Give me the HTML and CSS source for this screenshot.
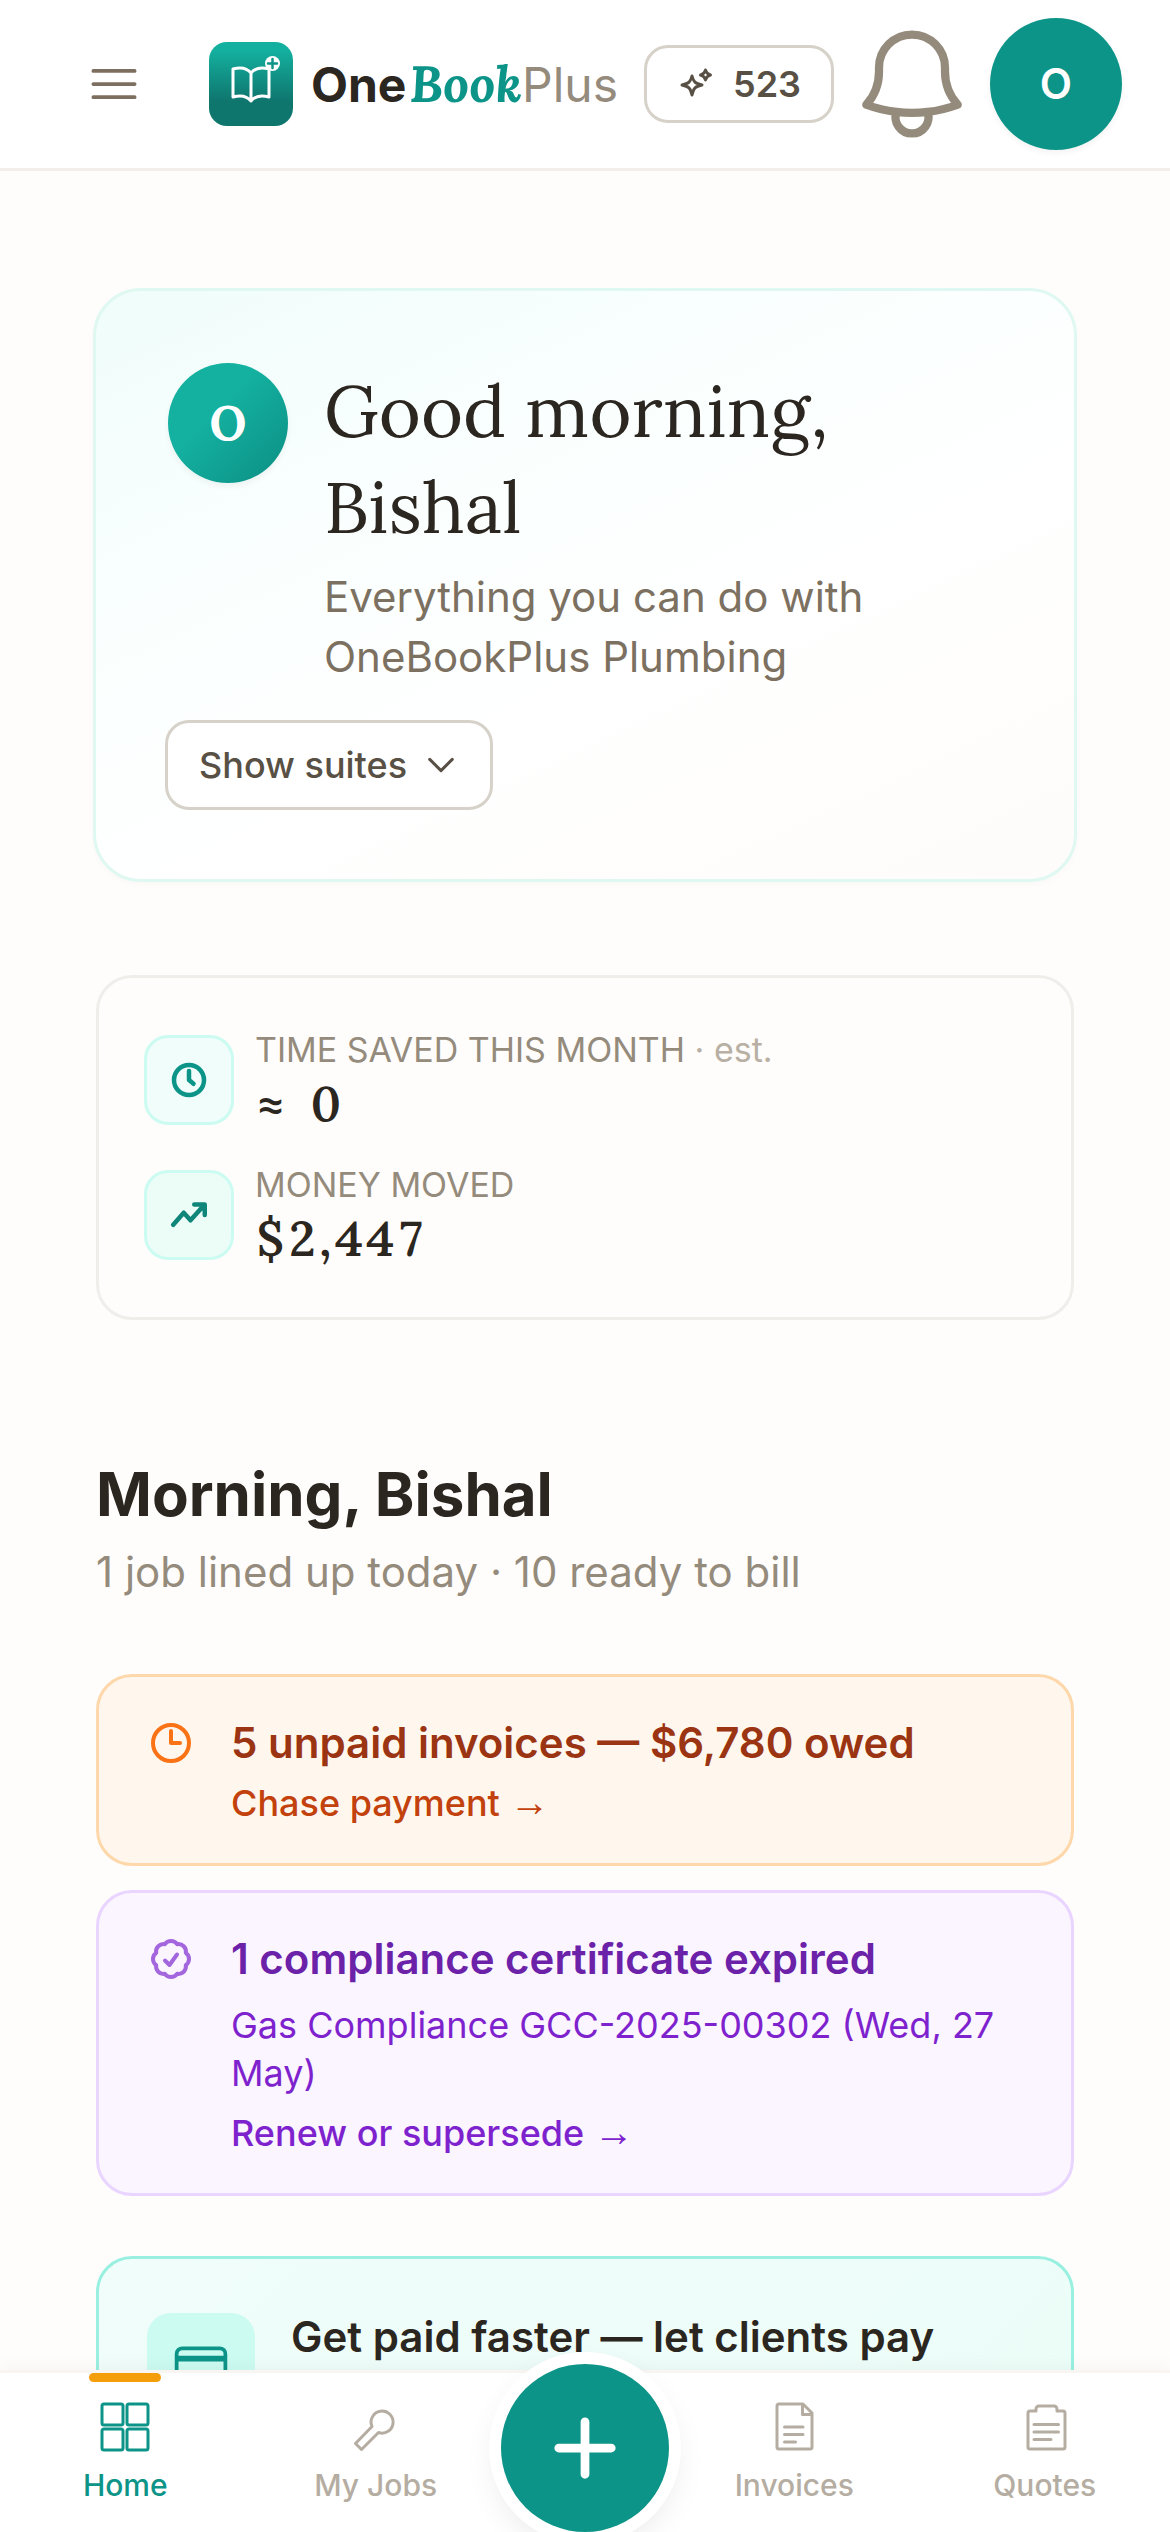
FILE: index.html
```html
<!DOCTYPE html>
<html lang="en">
<head>
  <meta charset="UTF-8">
  <meta name="viewport" content="width=device-width, initial-scale=1">
  <title>OneBookPlus</title>
  <link rel="stylesheet" href="styles.css">
</head>
<body>

<header class="topbar">
  <button type="button" class="icon-btn menu-btn" aria-label="Menu">
    <svg viewBox="0 0 24 24"><path d="M3.75 6.75h16.5M3.75 12h16.5M3.75 17.25h16.5"/></svg>
  </button>

  <a href="#" class="brand">
    <svg class="brand-logo" viewBox="0 0 84 84">
      <defs>
        <linearGradient id="logoFill" x1="0" y1="0" x2="0" y2="1">
          <stop offset="0.1" stop-color="#14b09f"/>
          <stop offset="0.7" stop-color="#0f766e"/>
        </linearGradient>
      </defs>
      <rect width="84" height="84" rx="18" fill="url(#logoFill)"/>
      <path d="M42 31c-4-5-11-6-18-4v28c7-2 14-1 18 4 4-5 11-6 18-4V27c-7-2-14-1-18 4zM42 31v28" fill="none" stroke="#fff" stroke-width="3" stroke-linejoin="round"/>
      <circle cx="63.500" cy="21.500" r="7.500" fill="#fff"/>
      <path d="M63.500 17v9M59 21.500h9" stroke="#0d9488" stroke-width="2.500" stroke-linecap="round"/>
    </svg>
    <span class="brand-name"><b>One</b><em>Book</em><span>Plus</span></span>
  </a>

  <div class="topbar-actions">
    <button type="button" class="credits">
      <svg viewBox="0 0 36 36"><path d="M15 10c1.500 6 3 7.500 10 9-7 1.500-8.500 3-10 10-1.500-7-3-8.500-10-10 7-1.500 8.500-3 10-9zM28.500 4c.8 3.200 1.800 4.200 5 5-3.200.8-4.200 1.800-5 5-.8-3.200-1.800-4.200-5-5 3.200-.8 4.200-1.800 5-5z"/></svg>
      523
    </button>
    <button type="button" class="icon-btn bell-btn" aria-label="Notifications">
      <svg viewBox="0 0 24 24"><path d="M14.857 17.082a23.848 23.848 0 0 0 5.454-1.310A8.967 8.967 0 0 1 18 9.750V9A6 6 0 0 0 6 9v.75a8.967 8.967 0 0 1-2.312 6.022c1.733.64 3.560 1.085 5.455 1.310m5.714 0a24.255 24.255 0 0 1-5.714 0m5.714 0a3 3 0 1 1-5.714 0"/></svg>
    </button>
    <button type="button" class="avatar">O</button>
  </div>
</header>

<main class="content">
  <section class="hero">
    <div class="hero-top">
      <div class="hero-avatar">O</div>
      <div class="hero-text">
        <h1>Good morning, Bishal</h1>
        <p>Everything you can do with OneBookPlus Plumbing</p>
      </div>
    </div>
    <button type="button" class="suites-btn">
      Show suites
      <svg viewBox="0 0 24 24"><path d="M19.500 8.250l-7.500 7.500-7.500-7.500"/></svg>
    </button>
  </section>

  <section class="stats">
    <div class="stat">
      <div class="stat-icon">
        <svg viewBox="0 0 24 24"><circle cx="12" cy="12" r="10"/><path d="M12 6v6l3 2.500"/></svg>
      </div>
      <div>
        <div class="stat-label">TIME SAVED THIS MONTH <span>· est.</span></div>
        <div class="stat-value">≈ 0</div>
      </div>
    </div>
    <div class="stat">
      <div class="stat-icon stat-icon-money">
        <svg viewBox="0 0 24 24"><path d="M1.500 18.500l7-8 4.500 5 9-10M15.500 5h7v7"/></svg>
      </div>
      <div>
        <div class="stat-label">MONEY MOVED</div>
        <div class="stat-value">$2,447</div>
      </div>
    </div>
  </section>

  <section class="today">
    <h2>Morning, Bishal</h2>
    <p class="today-sub">1 job lined up today · 10 ready to bill</p>

    <div class="alerts">
      <article class="alert alert-orange">
        <svg viewBox="0 0 24 24"><path d="M12 6v6h4.500M21 12a9 9 0 1 1-18 0 9 9 0 0 1 18 0z"/></svg>
        <div>
          <h3>5 unpaid invoices — $6,780 owed</h3>
          <a href="#">Chase payment <span class="arrow">→</span></a>
        </div>
      </article>

      <article class="alert alert-purple">
        <svg viewBox="0 0 24 24"><path d="M9 12.750L11.250 15 15 9.750M21 12c0 1.268-.63 2.390-1.593 3.068a3.745 3.745 0 0 1-1.043 3.296 3.745 3.745 0 0 1-3.296 1.043A3.745 3.745 0 0 1 12 21c-1.268 0-2.390-.63-3.068-1.593a3.746 3.746 0 0 1-3.296-1.043 3.745 3.745 0 0 1-1.043-3.296A3.745 3.745 0 0 1 3 12c0-1.268.63-2.390 1.593-3.068a3.745 3.745 0 0 1 1.043-3.296 3.746 3.746 0 0 1 3.296-1.043A3.746 3.746 0 0 1 12 3c1.268 0 2.390.63 3.068 1.593a3.746 3.746 0 0 1 3.296 1.043 3.746 3.746 0 0 1 1.043 3.296A3.745 3.745 0 0 1 21 12z"/></svg>
        <div>
          <h3>1 compliance certificate expired</h3>
          <p>Gas Compliance GCC-2025-00302 (Wed, 27 May)</p>
          <a href="#">Renew or supersede <span class="arrow">→</span></a>
        </div>
      </article>
    </div>
  </section>

  <section class="promo">
    <div class="promo-icon">
      <svg viewBox="0 0 24 24"><path d="M2.250 8.250h19.500M2.250 9h19.500M4.500 19.500h15a2.250 2.250 0 0 0 2.250-2.250V6.750A2.250 2.250 0 0 0 19.500 4.500h-15a2.250 2.250 0 0 0-2.250 2.250v10.500A2.250 2.250 0 0 0 4.500 19.500z"/></svg>
    </div>
    <h3>Get paid faster — let clients pay</h3>
  </section>
</main>

<nav class="tabbar">
  <a href="#" class="tab active">
    <svg viewBox="0 0 60 60"><rect x="7" y="7" width="21" height="21" rx="2"/><rect x="32" y="7" width="21" height="21" rx="2"/><rect x="7" y="32" width="21" height="21" rx="2"/><rect x="32" y="32" width="21" height="21" rx="2"/></svg>
    Home
  </a>
  <a href="#" class="tab">
    <svg viewBox="0 0 60 60"><path d="M26 29.500A11 11 0 1 1 32.500 35.500L15.500 52.500 9.500 46.500z"/></svg>
    My Jobs
  </a>
  <button type="button" class="fab" aria-label="Add">
    <svg viewBox="0 0 24 24"><path d="M12 4.500v15M4.500 12h15"/></svg>
  </button>
  <a href="#" class="tab">
    <svg viewBox="0 0 60 60"><path d="M14 7h25l9 9v34a2 2 0 0 1-2 2H15a2 2 0 0 1-2-2V9a2 2 0 0 1 2-2zM38.500 7v10.500H48M20.500 30h18.500M20.500 37.500h18.500M20.500 45h11"/></svg>
    Invoices
  </a>
  <a href="#" class="tab">
    <svg viewBox="0 0 60 60"><path d="M21 14v-2a3 3 0 0 1 3-3h15a3 3 0 0 1 3 3v2h6a2 2 0 0 1 2 2v34a2 2 0 0 1-2 2H15a2 2 0 0 1-2-2V16a2 2 0 0 1 2-2zM19 27.500h24.500M19 35h24.500M19 42.500h17"/></svg>
    Quotes
  </a>
</nav>

</body>
</html>
```

FILE: styles.css
```css
* {
  box-sizing: border-box;
}
body {
  margin: 0;
  height: 100vh;
  display: flex;
  flex-direction: column;
  background: #fefdfb;
  color: #2c2621;
  font-family: Inter, "Liberation Sans", sans-serif;
  font-size: 42px;
  line-height: 60px;
}
h1, h2, h3, p {
  margin: 0;
}
a {
  color: inherit;
  text-decoration: none;
}
button {
  font: inherit;
  color: inherit;
  padding: 0;
  border: none;
  background: none;
  cursor: pointer;
}
svg {
  display: block;
  flex: none;
  fill: none;
  stroke: currentColor;
  stroke-width: 1.5;
  stroke-linecap: round;
  stroke-linejoin: round;
}

/* header */
.topbar {
  display: flex;
  align-items: center;
  padding: 18px 48px 18px 84px;
  background: #fff;
  border-bottom: 3px solid #f3eeea;
}
.menu-btn {
  color: #7c6f60;
}
.menu-btn svg {
  width: 60px;
  height: 60px;
}
.brand {
  display: flex;
  align-items: center;
  gap: 18px;
  margin-left: 65px;
}
.brand-logo {
  width: 84px;
  height: 84px;
  stroke: none;
}
.brand-name {
  font-size: 48px;
  white-space: nowrap;
}
.brand-name b {
  font-weight: 700;
}
.brand-name em {
  margin-left: 3px;
  font-family: Lora, "Liberation Serif", serif;
  font-size: 51px;
  font-weight: 700;
  color: #0d9488;
}
.brand-name span {
  font-weight: 400;
  color: #958b7c;
}
.topbar-actions {
  display: flex;
  align-items: center;
  gap: 12px;
  margin-left: auto;
}
.credits {
  display: flex;
  align-items: center;
  gap: 20px;
  height: 78px;
  padding: 0 30px;
  border: 3px solid #d6d2c9;
  border-radius: 24px;
  background: #fff;
  color: #585044;
  font-size: 36px;
  font-weight: 600;
}
.credits svg {
  width: 36px;
  height: 36px;
  stroke-width: 3;
}
.bell-btn {
  color: #958b7c;
}
.bell-btn svg {
  width: 132px;
  height: 132px;
}
.avatar {
  width: 132px;
  height: 132px;
  border-radius: 50%;
  background: #0d9488;
  color: #fff;
  font-weight: 600;
  box-shadow: 0 3px 6px rgba(0,0,0,0.05);
}

/* scrolling content */
.content {
  flex: 1;
  min-height: 0;
  padding: 117px 96px 48px;
  overflow-y: auto;
  scrollbar-width: none;
}
.hero {
  margin: 0 -3px;
  padding: 69px;
  border: 3px solid #dff8f1;
  border-radius: 48px;
  background: linear-gradient(155deg, #f0fdfa 0%, #f9fffe 30%, #fff 60%, #fefcfa 100%);
  box-shadow: 0 3px 6px rgba(0,0,0,0.02);
}
.hero-top {
  display: flex;
  gap: 33px;
}
.hero-avatar {
  flex: none;
  display: flex;
  align-items: center;
  justify-content: center;
  width: 120px;
  height: 120px;
  margin: 3px;
  border-radius: 50%;
  background: linear-gradient(135deg, #14b0a0 40%, #0d9488 90%);
  color: #fff;
  font-family: Lora, "Liberation Serif", serif;
  font-size: 48px;
  font-weight: 700;
  box-shadow: 0 3px 6px rgba(0,0,0,0.05);
}
.hero-text {
  max-width: 600px;
  padding-top: 3px;
}
.hero h1 {
  font-family: Lora, "Liberation Serif", serif;
  font-size: 72px;
  font-weight: 400;
  line-height: 96px;
}
.hero p {
  margin-top: 12px;
  color: #7c7061;
}
.suites-btn {
  display: flex;
  align-items: center;
  gap: 16px;
  height: 90px;
  margin-top: 33px;
  padding: 0 31px;
  border: 3px solid #d6d2c9;
  border-radius: 24px;
  background: #fff;
  color: #585044;
  font-size: 36px;
  font-weight: 500;
}
.suites-btn svg {
  width: 36px;
  height: 36px;
  stroke-width: 2;
}

.stats {
  display: flex;
  flex-direction: column;
  gap: 27px;
  margin-top: 93px;
  padding: 48px 45px;
  border: 3px solid #f0eeea;
  border-radius: 36px;
}
.stat {
  display: flex;
  align-items: center;
  gap: 21px;
}
.stat-icon {
  display: flex;
  align-items: center;
  justify-content: center;
  width: 90px;
  height: 90px;
  border: 3px solid #ccfbf1;
  border-radius: 24px;
  background: #f0fdfa;
  color: #0d9488;
}
.stat-icon-money {
  background: #ecfdf8;
  color: #10857a;
}
.stat-icon svg {
  width: 36px;
  height: 36px;
  stroke-width: 3;
}
.stat-label {
  color: #958b7c;
  font-size: 34px;
  line-height: 48px;
}
.stat-label span {
  color: #b8b0a5;
}
.stat-value {
  font-family: Lora, "Liberation Serif", serif;
  font-size: 48px;
  font-weight: 600;
  line-height: 60px;
  font-variant-numeric: tabular-nums;
}

.today {
  margin-top: 132px;
}
.today h2 {
  font-size: 60px;
  font-weight: 700;
  line-height: 84px;
}
.today-sub {
  margin-top: 6px;
  color: #958b7c;
}
.alerts {
  display: flex;
  flex-direction: column;
  gap: 24px;
  margin-top: 72px;
}
.alert {
  display: flex;
  gap: 36px;
  padding: 36px 48px;
  border: 3px solid;
  border-radius: 36px;
  font-size: 36px;
  line-height: 48px;
}
.alert svg {
  width: 48px;
  height: 48px;
  margin-top: 6px;
  stroke-width: 2;
}
.alert h3,
.promo h3 {
  font-size: 42px;
  font-weight: 600;
  line-height: 60px;
}
.alert p {
  margin: 12px 0;
}
.alert a {
  display: block;
  margin-top: 6px;
  font-weight: 500;
}
.arrow {
  font-family: "Liberation Serif", serif;
  font-size: 40px;
  font-weight: 400;
  line-height: 1;
}
.alert-orange {
  background: #fff7ed;
  border-color: #fed7aa;
  color: #c2410c;
}
.alert-orange svg {
  color: #f97316;
}
.alert-orange h3 {
  color: #9a3412;
}
.alert-purple {
  background: #faf5ff;
  border-color: #e9d5ff;
  color: #7e22ce;
}
.alert-purple svg {
  color: #a366dd;
}
.alert-purple h3 {
  color: #6b21a8;
}

.promo {
  display: flex;
  align-items: flex-start;
  gap: 36px;
  margin-top: 60px;
  padding: 48px;
  border: 3px solid #99f0e0;
  border-radius: 36px;
  background: linear-gradient(135deg, #f0fdfa, #ecfdf8);
}
.promo-icon {
  flex: none;
  margin-top: 6px;
  padding: 24px;
  border-radius: 24px;
  background: #ccfbf1;
  color: #0d9488;
}
.promo-icon svg {
  width: 60px;
  height: 60px;
}

/* bottom navigation */
.tabbar {
  position: relative;
  display: flex;
  align-items: flex-end;
  background: #fff;
  border-top: 3px solid #f8f5f2;
  box-shadow: 0 -3px 18px rgba(0,0,0,0.04);
}
.tab {
  position: relative;
  flex: 1;
  display: flex;
  flex-direction: column;
  align-items: center;
  gap: 6px;
  padding: 24px 0 24px;
  color: #b5ada2;
  font-size: 30px;
  font-weight: 500;
  line-height: 45px;
}
.tab svg {
  width: 60px;
  height: 60px;
  stroke-width: 3;
}
.tab.active {
  color: #0d9488;
}
.tab.active::before {
  content: "";
  position: absolute;
  top: 0;
  width: 72px;
  height: 9px;
  border-radius: 9px;
  background: #f59e0b;
}
.fab {
  display: flex;
  align-items: center;
  justify-content: center;
  width: 168px;
  height: 168px;
  margin-top: -12px;
  border-radius: 50%;
  background: #0d9488;
  color: #fff;
  box-shadow: 0 0 0 12px #fff, 0 12px 36px rgba(0,0,0,0.12);
}
.fab svg {
  width: 84px;
  height: 84px;
  stroke-width: 2.5;
}
```
